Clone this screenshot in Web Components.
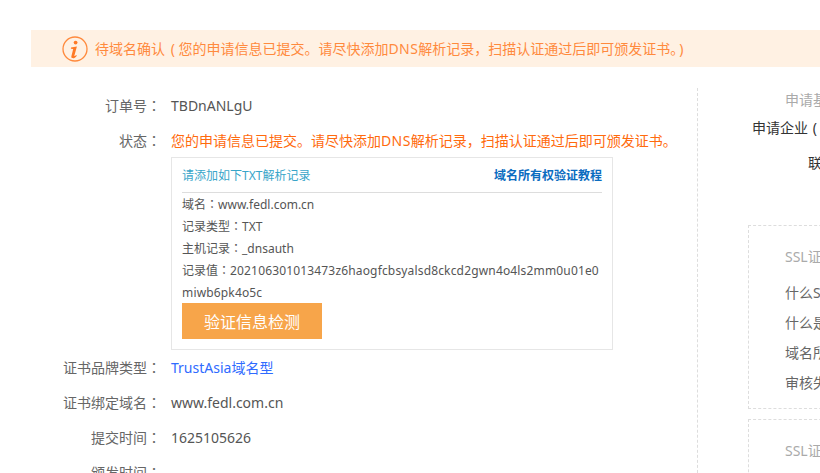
<!DOCTYPE html>
<html>
<head>
<meta charset="utf-8">
<style>
html, body { margin: 0; padding: 0; height: 473px; overflow: hidden; background: #fff; }
body { font-family: "Noto Sans", "Noto Sans CJK SC", sans-serif; font-size: 14px; }
</style>
</head>
<body>
<cert-page>
  <notice-bar status="待域名确认"><latin-word>您的申请信息已提交。请尽快添加DNS解析记录，扫描认证通过后即可颁发证书。</latin-word></notice-bar>
  <order-detail slot="main">
    <order-row label="订单号">TBDnANLgU</order-row>
    <order-row label="状态" tone="warn"><latin-word>您的申请信息已提交。请尽快添加DNS解析记录，扫描认证通过后即可颁发证书。</latin-word></order-row>
    <record-box>
      <record-line label="域名">www.fedl.com.cn</record-line>
      <record-line label="记录类型">TXT</record-line>
      <record-line label="主机记录">_dnsauth</record-line>
      <record-line label="记录值" spaced>202106301013473z6haogfcbsyalsd8ckcd2gwn4o4ls2mm0u01e0miwb6pk4o5c</record-line>
    </record-box>
    <order-row label="证书品牌类型" tone="link">TrustAsia域名型</order-row>
    <order-row label="证书绑定域名">www.fedl.com.cn</order-row>
    <order-row label="提交时间">1625105626</order-row>
    <order-row label="颁发时间"></order-row>
  </order-detail>
  <side-panel slot="side">
    <help-card title="SSL证">
      <div>什么S</div>
      <div>什么是</div>
      <div>域名所</div>
      <div>审核失</div>
    </help-card>
    <help-card title="SSL证"></help-card>
  </side-panel>
</cert-page>

<script>
// the full-width colon sits centred in its cell in the TC cut
const COLON = `<span style='font-family:"Noto Sans CJK TC",sans-serif;line-height:1'>：</span>`;

class CertPage extends HTMLElement {
    constructor() {
        super();
        this.attachShadow({ mode: "open" }).innerHTML = `
        <style>
            :host { display: block; width: 820px; height: 473px; overflow: hidden; padding: 30px 0 0 31px; box-sizing: border-box; }
            .cols { display: flex; width: 789px; margin-top: 21px; }
            .left { flex: 0 0 666px; }
            .right { flex: 0 0 123px; }
        </style>
        <slot></slot>
        <div class="cols">
            <div class="left"><slot name="main"></slot></div>
            <div class="right"><slot name="side"></slot></div>
        </div>`;
    }
}

class NoticeBar extends HTMLElement {
    constructor() {
        super();
        this.attachShadow({ mode: "open" }).innerHTML = `
        <style>
            :host { display: flex; align-items: center; width: 789px; height: 37px; background: #fff1e3; color: #ff8a3d; padding-left: 31px; box-sizing: border-box; white-space: nowrap; }
            svg { flex: none; margin-right: 7px; }
            .text { padding-bottom: 2px; }
            .open { margin-left: 2px; }
            .close { margin-left: 2px; }
        </style>
        <svg width="26" height="26" viewBox="0 0 26 26">
            <circle cx="13" cy="13" r="12" fill="none" stroke="#ff8a3d" stroke-width="1.3"/>
            <circle cx="13.6" cy="6.6" r="1.9" fill="#ff7a26"/>
            <path d="M9 11.4 L14.9 10.5 L12.4 19.4 C12.2 20.3 12.8 20.4 14.2 19.1 L14.8 19.7 C13 21.9 11.6 22.6 10.2 22.1 C9.2 21.7 9.2 20.8 9.5 19.8 L11.2 13.1 L8.9 12.8 Z" fill="#ff7a26"/>
        </svg>
        <span class="text">${this.getAttribute("status")} <span class="open">(</span><slot></slot><span class="close">)</span></span>`;
    }
}

class LatinWord extends HTMLElement {
    constructor() {
        super();
        // the DNS in the middle runs a little wider than the font gives
        const txt = this.textContent.split("DNS");
        this.textContent = "";
        this.attachShadow({ mode: "open" }).innerHTML = `
        <style>
            :host { display: inline; }
            b { font-weight: normal; letter-spacing: 0.4px; }
        </style>${txt[0]}<b>DNS</b>${txt[1]}`;
    }
}

class OrderDetail extends HTMLElement {
    constructor() {
        super();
        this.attachShadow({ mode: "open" }).innerHTML = `
        <style>:host { display: block; padding-bottom: 20px; }</style>
        <slot></slot>`;
    }
}

class OrderRow extends HTMLElement {
    constructor() {
        super();
        const tone = this.getAttribute("tone") || "";
        this.attachShadow({ mode: "open" }).innerHTML = `
        <style>
            :host { display: flex; height: 35px; line-height: 35px; white-space: nowrap; }
            .label { flex: 0 0 130px; text-align: right; color: #666; }
            .value { margin-left: 10px; color: #555; }
            .warn { color: #ff6a0d; }
            .link { color: #2f6bff; }
        </style>
        <div class="label">${this.getAttribute("label")}${COLON}</div>
        <div class="value ${tone}"><slot></slot></div>`;
    }
}

class RecordBox extends HTMLElement {
    constructor() {
        super();
        this.attachShadow({ mode: "open" }).innerHTML = `
        <style>
            :host { display: block; width: 442px; margin: -1px 0 0 140px; box-sizing: border-box; border: 1px solid #e6e6e6; padding: 0 10px 10px; font-size: 12px; color: #555; }
            .head { display: flex; justify-content: space-between; align-items: center; height: 34px; border-bottom: 1px solid #ddd; }
            .tip { color: #38a5c9; }
            .guide { color: #0b6cbf; font-weight: bold; }
            .rows { padding-top: 1px; margin-bottom: -1px; line-height: 22px; }
            button { display: block; position: relative; width: 140px; height: 36px; border: 0; padding: 0; background: #f7a54a; color: #fff; font: inherit; font-size: 16px; }
        </style>
        <div class="head"><span class="tip">请添加如下TXT解析记录</span><span class="guide">域名所有权验证教程</span></div>
        <div class="rows"><slot></slot></div>
        <button>验证信息检测</button>`;
    }
}

class RecordLine extends HTMLElement {
    constructor() {
        super();
        const spaced = this.hasAttribute("spaced") ? "letter-spacing:0.16px" : "";
        this.attachShadow({ mode: "open" }).innerHTML = `
        <style>
            :host { display: block; word-break: break-all; }
        </style>
        ${this.getAttribute("label")}${COLON}<span style="${spaced}"><slot></slot></span>`;
    }
}

class SidePanel extends HTMLElement {
    constructor() {
        super();
        this.attachShadow({ mode: "open" }).innerHTML = `
        <style>
            :host { display: block; height: 400px; border-left: 1px dashed #ddd; box-sizing: border-box; white-space: nowrap; }
            .info { padding-left: 54px; height: 137px; color: #333; line-height: 35px; }
            .title { color: #aaa; padding-left: 33px; height: 22px; line-height: 24px; }
            .name { padding-left: 56px; }
            .cards { padding-left: 50px; }
            .paren { margin-left: 1px; }
        </style>
        <div class="info">
            <div class="title">申请基</div>
            <div>申请企业 <span class="paren">(</span></div>
            <div class="name">联</div>
        </div>
        <div class="cards"><slot></slot></div>`;
    }
}

class HelpCard extends HTMLElement {
    constructor() {
        super();
        this.attachShadow({ mode: "open" }).innerHTML = `
        <style>
            :host { display: block; width: 120px; height: 184px; margin-bottom: 10px; box-sizing: border-box; border: 1px dashed #ddd; padding: 16px 0 0 36px; color: #666; }
            .title { color: #aaa; line-height: 30px; margin-bottom: 6px; }
            .list { line-height: 30px; }
        </style>
        <div class="title">${this.getAttribute("title")}</div>
        <div class="list"><slot></slot></div>`;
    }
}

customElements.define("latin-word", LatinWord);
customElements.define("cert-page", CertPage);
customElements.define("notice-bar", NoticeBar);
customElements.define("order-detail", OrderDetail);
customElements.define("order-row", OrderRow);
customElements.define("record-box", RecordBox);
customElements.define("record-line", RecordLine);
customElements.define("side-panel", SidePanel);
customElements.define("help-card", HelpCard);
</script>
</body>
</html>
